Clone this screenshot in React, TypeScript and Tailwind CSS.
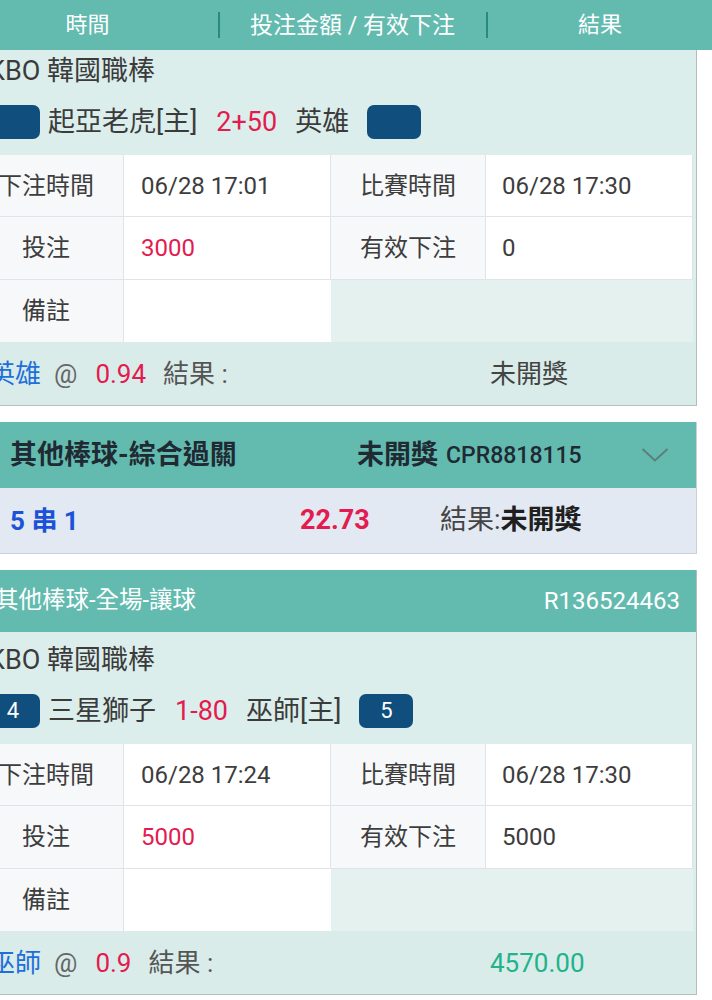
import React from "react";

const FONT = "font-['Roboto','Noto_Sans_CJK_TC',sans-serif]";

function Badge({ n }: { n?: string }) {
  return (
    <div className="w-[54px] h-[34px] rounded-[7px] bg-[#0f4e7d] text-white text-[22px] flex items-center justify-center leading-none">
      {n ?? ""}
    </div>
  );
}

type Bet = {
  home: string;
  handicap: string;
  away: string;
  leftBadge?: string;
  rightBadge?: string;
  betTime: string;
  matchTime: string;
  stake: string;
  valid: string;
  pick: string;
  odds: string;
  result: string;
  resultColor: string;
};

function BetBody({ b, top }: { b: Bet; top: number }) {
  return (
    <div className="bg-[#dbeeeb]" style={{ paddingTop: top }}>
      <div className="h-[36px] flex items-center pl-[19px] text-[27px] text-[#3b3b3b] leading-none">
        KBO 韓國職棒
      </div>
      <div className="mt-[16px] h-[34px] flex items-center pl-[17px] text-[27px] text-[#3b3b3b] leading-none">
        <Badge n={b.leftBadge} />
        <span className="ml-[8px]">{b.home}</span>
        <span className="ml-[19px] text-[#e31b4f]">{b.handicap}</span>
        <span className="ml-[18px]">{b.away}</span>
        <span className="ml-[18px]">
          <Badge n={b.rightBadge} />
        </span>
      </div>
      <div className="mt-[16px] pr-[3px]">
        <div className="grid grid-cols-[155px_207px_155px_207px] text-[24px] text-[#3d3d3d] leading-none">
          <div className="h-[62px] bg-[#f7f8fa] flex items-center justify-center border-r border-b border-[#dfe4e8]">下注時間</div>
          <div className="h-[62px] bg-white flex items-center pl-[17px] border-r border-b border-[#dfe4e8]">{b.betTime}</div>
          <div className="h-[62px] bg-[#f7f8fa] flex items-center justify-center border-r border-b border-[#dfe4e8]">比賽時間</div>
          <div className="h-[62px] bg-white flex items-center pl-[16px] border-r border-b border-[#dfe4e8]">{b.matchTime}</div>

          <div className="h-[63px] bg-[#f7f8fa] flex items-center justify-center border-r border-b border-[#dfe4e8]">投注</div>
          <div className="h-[63px] bg-white flex items-center pl-[17px] border-r border-b border-[#dfe4e8] text-[#e31b4f]">{b.stake}</div>
          <div className="h-[63px] bg-[#f7f8fa] flex items-center justify-center border-r border-b border-[#dfe4e8]">有效下注</div>
          <div className="h-[63px] bg-white flex items-center pl-[16px] border-r border-b border-[#dfe4e8]">{b.valid}</div>

          <div className="h-[62px] bg-[#f7f8fa] flex items-center justify-center border-r border-[#dfe4e8]">備註</div>
          <div className="h-[62px] bg-white"></div>
          <div className="h-[62px] col-span-2 bg-[#e4f1ef]"></div>
        </div>
      </div>
      <div className="h-[63px] bg-[#d9ecea] flex items-center text-[26px] leading-none text-[#555]">
        <div className="w-[517px] flex items-center pl-[20px]">
          <span className="text-[#1e6fd9]">{b.pick}</span>
          <span className="ml-[13px] text-[#666]">@</span>
          <span className="ml-[18px] text-[#e31b4f]">{b.odds}</span>
          <span className="ml-[17px] text-[#555]">結果 :</span>
        </div>
        <div className="pl-[4px]" style={{ color: b.resultColor }}>{b.result}</div>
      </div>
    </div>
  );
}

export default function App() {
  const b1: Bet = {
    home: "起亞老虎[主]",
    handicap: "2+50",
    away: "英雄",
    betTime: "06/28 17:01",
    matchTime: "06/28 17:30",
    stake: "3000",
    valid: "0",
    pick: "英雄",
    odds: "0.94",
    result: "未開獎",
    resultColor: "#444",
  };
  const b3: Bet = {
    home: "三星獅子",
    handicap: "1-80",
    away: "巫師[主]",
    leftBadge: "4",
    rightBadge: "5",
    betTime: "06/28 17:24",
    matchTime: "06/28 17:30",
    stake: "5000",
    valid: "5000",
    pick: "巫師",
    odds: "0.9",
    result: "4570.00",
    resultColor: "#22b38b",
  };

  return (
    <div className={`w-[712px] min-h-[1000px] bg-white overflow-hidden ${FONT}`}>
      <div className="h-[50px] bg-[#63bbb0] flex items-center text-white text-[22px] leading-none">
        <div className="w-[175px] text-center">時間</div>
        <div className="w-[350px] pl-[6px] flex items-center justify-center">
          <span className="w-[2px] h-[26px] bg-[#2a8a80] mr-[30px]"></span>
          <span className="text-[23px]">投注金額 / 有效下注</span>
          <span className="w-[2px] h-[26px] bg-[#2a8a80] ml-[31px]"></span>
        </div>
        <div className="w-[150px] text-center">結果</div>
      </div>

      <div className="ml-[-31px] w-[728px]">
        <div className="border-r border-b border-[#b3bfbd]">
          <BetBody b={b1} top={3} />
        </div>

        <div className="mt-[16px] border-r border-b border-[#c9d1d6]">
          <div className="h-[66px] bg-[#63bbb0] flex items-center leading-none text-[#1f2a33]">
            <div className="w-[388px] pl-[41px] text-[27px] font-bold">其他棒球-綜合過關</div>
            <div className="text-[27px] font-bold">未開獎</div>
            <div className="ml-[8px] text-[23px] font-medium">CPR8818115</div>
            <svg className="ml-auto mr-[27px]" width="28" height="16" viewBox="0 0 28 16" fill="none">
              <path d="M1.5 2 L14 13.5 L26.5 2" stroke="#5d7f7b" strokeWidth="2" />
            </svg>
          </div>
          <div className="h-[65px] bg-[#e2e9f3] flex items-center leading-none text-[27px]">
            <div className="w-[331px] pl-[41px] font-bold text-[#1b52d8] text-[26px]">5 串 1</div>
            <div className="w-[140px] font-bold text-[#e31b4f]">22.73</div>
            <div className="text-[#444]">結果:<span className="font-bold text-[#1f1f1f]">未開獎</span></div>
          </div>
        </div>

        <div className="mt-[16px] border-r border-b border-[#b3bfbd]">
          <div className="h-[62px] bg-[#63bbb0] flex items-center justify-between pl-[26px] pr-[16px] text-white text-[23.5px] leading-none">
            <span>其他棒球-全場-讓球</span>
            <span className="text-[24px]">R136524463</span>
          </div>
          <BetBody b={b3} top={10} />
        </div>
      </div>
    </div>
  );
}
